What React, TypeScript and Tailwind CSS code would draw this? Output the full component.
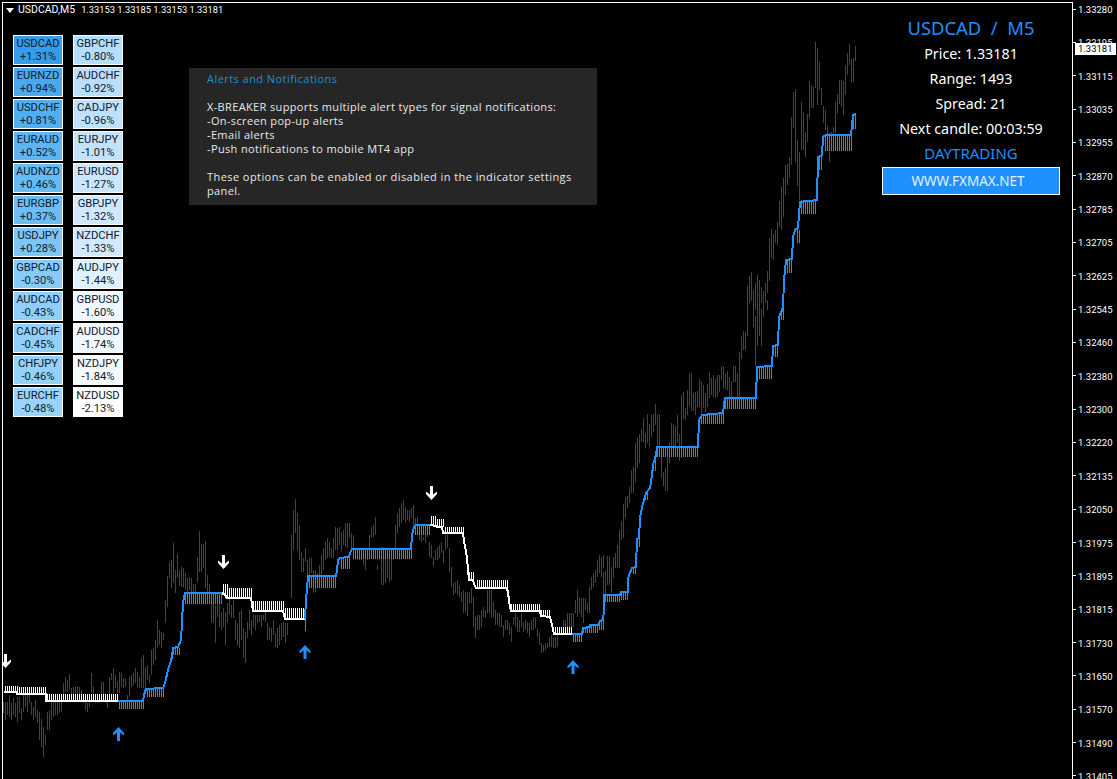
import React from 'react';

type Tick = [number, number, number, number];

const BLUE = '#1e90ff';

// price bars, read off the chart as [top, bottom] pairs in 3x crop units, every 2px
const barRuns: { ox: number; oy: number; start: number; pairs: number[] }[] = [
  {
    ox: 0, oy: 560, start: 10,
    pairs: [425,458,425,480,425,465,405,470,430,480,415,465,430,470,410,485,410,460,445,480,405,455,405,440,405,455,405,430,425,465,440,480,420,470,450,490,455,540,478,560,500,590,525,555,455,510,450,510,425,480,425,470,425,465,420,465,425,460,425,455,370,420,350,395,360,395,342,390,385,420,380,415,380,420,378,415,380,410,390,425,410,430,425,450,430,455,420,440,340,400,380,420,410,430,420,430,420,430,365,420,365,420,420,430,420,445,350,410,340,360,325,400,345,385,365,400,335,400,340,380,355,385,355,380,405,420,350,410,345,380,340,375,325,370,335,380,350,385,295,385,285,385,320,390,315,360,345,370,270,345,265,315,240,300,180,260,210,255,215,265,220,240,120,190],
  },
  {
    ox: 160, oy: 490, start: 22,
    pairs: [258,351,216,264,210,294,159,279,240,309,192,264,240,288,228,291,234,291,249,300,264,306,261,300,264,309,282,330,282,330,201,276,123,246,162,246,162,234,153,294,255,309,282,339],
  },
  {
    ox: 0, oy: 560, start: 634,
    pairs: [130,190,130,190,135,250,135,170,115,200,155,210,145,200,155,255,130,190,115,165,135,175,120,175,180,240,190,255,155,265,150,240,205,295,215,310,185,235,150,210,180,225,165,200,165,210,165,190,165,185,165,200,165,180,150,185,190,240,200,240,205,245,180,225,220,260,205,265,195,255,190,240,185,230,190,250,190,225],
  },
  {
    ox: 290, oy: 470, start: 4,
    pairs: [195,385,120,240,88,190,130,240,165,270,245,305,265,305,235,275,270,315,265,350,265,310,300,370,300,365,310,345,285,345,255,330,235,300,215,270,205,265,215,260,235,265,205,265,170,240,175,240,170,225,185,245,180,225,160,230,160,235,160,205,190,235,195,240,240,270,240,270,240,270,240,270,250,285,240,300,240,270,195,235,170,205,165,200,140,195,285,300,240,270,230,345,230,345,240,340,240,325,240,335,240,330,240,270,165,235,130,190,115,170,100,160,90,150,110,155,120,150,120,155,115,145,105,165,145,190,140,185,195,210,190,215,200,210,195,218,170,200,215,260,225,265,260,288,240,270,230,270,225,265,215,250,240,278,195,240,195,235,235,305,290,350,340,375,335,370,330,375,345,380,365,395,360,430,365,430,365,438,365,400,355,400,380,470,440,505,435,480,435,480,420,470,410,440,420,445,360,430,360,430,360,445,395,440,420,465,430,465,430,470,435,470,465,500,450,480,450,480,460,495,470,515,440,465,430,470,440,485,450,485,430,470,455,485,450,480,455,490,460,500,450,480,440,480,445,475,478,500,490,525,520,550,525,545,520,540,520,535,500,530,495,530,505,535,500,535,495,530,480,495,480,495,450,490,450,490,430,470,430,470,430,470,430,470,390,430,360,440,380,430,385,440,385,460,385,420,400,430,350,430,320,360,310,350,300,340,270,320,255,310,260,320,255,295,305,375,260,345,270,345],
  },
  {
    ox: 600, oy: 300, start: 10,
    pairs: [815,885,812,878,768,840,768,810,800,878,770,835,758,805,735,805,690,805,663,720,612,715,590,655,588,625,560,610,510,580,500,578,430,545,415,505,403,490,387,425,353,425,400,443,342,430,372,440,345,410,342,395,312,375,345,440,342,440,470,535,515,558,505,572,470,572,427,490,370,440,373,440,378,440,345,430,403,482,285,475,276,358,325,360,270,345,222,318,220,332,278,332,276,345,273,320,237,320,243,340,255,325,280,335,252,320,217,295,235,285,225,290,237,295,225,290,225,275,202,240,198,265,222,268,213,270,232,290,243,292,198,247,198,245,220,290,155,290,108,177,93,150,97,150],
  },
  {
    ox: 600, oy: 300, start: 442,
    pairs: [0,107,0,8,0,3,0,80,48,197,0,137,0,107,27,137,0,50,0,8,0,30],
  },
  {
    ox: 740, oy: 30, start: 22,
    pairs: [768,840,738,815,726,812,780,840,760,840,735,840,750,840,770,820,783,820,760,820,723,790,625,752,598,685,612,690,600,640,576,645,513,590,472,600,445,560,405,495,402,465,380,445,262,405,187,295,178,395,330,468,365,510,217,360,247,360,307,380,252,335,153,265,165,235,172,235,37,173,55,225,97,180,175,225,228,280,240,300,288,340,310,395,305,350,292,340,217,310,193,250,150,222,150,230,153,255,105,195,68,135,43,105,88,160,85,155,48,92],
  },
];

const bars = barRuns.flatMap((run) => {
  const out: [number, number, number][] = [];
  for (let i = 0; i < run.pairs.length; i += 2) {
    out.push([
      Math.round(run.ox + (run.start + 3 * i) / 3),
      Math.round(run.oy + run.pairs[i] / 3),
      Math.round(run.oy + run.pairs[i + 1] / 3),
    ]);
  }
  return out;
});

const whiteLines = [
  '4,692 17,692 17,694 46,694 46,701 118,701',
  '222,593 225,595 227,598 251,598 252,604 253,611 283,611 284,615 285,619 305,619',
  '430,525 436,526 437,527 442,527 443,533 463,533 464,541 466,552 467,558 468,570 469,580 473,580 474,584 476,588 507,588 508,593 509,600 510,607 511,611 540,611 541,616 550,617 552,625 554,634 572,634',
];

const blueLines = [
  '118,701 143,701 144,695 146,689 163,688 165,683 168,670 172,657 173,648 178,647 181,640 182,623 183,602 185,593 222,593',
  '305,619 306,600 307,588 308,576 336,576 337,570 338,560 340,558 349,557 350,553 352,549 411,549 412,535 414,527 416,525 430,525',
  '572,634 582,634 583,628 590,627 590,625 598,625 600,621 603,620 604,610 604,595 620,595 621,592 628,592 628,578 632,568 636,567 637,539 639,538 640,518 642,507 646,493 650,488 652,475 653,465 656,455 657,447 698,447 699,420 702,415 723,413 725,398 756,398 757,367 772,366 773,346 778,345 779,317 783,308 784,280 786,260 792,259 793,237 795,230 798,228 800,202 817,200 818,157 822,155 823,137 826,135 851,135 853,115 856,114',
];

// x from, x to, y from, y to
const blueTicks: Tick[] = [
  [119, 143, 701, 709], [147, 163, 689, 697], [173, 180, 648, 655], [185, 221, 594, 604],
  [305, 305, 619, 631], [309, 336, 576, 588], [341, 349, 558, 569], [353, 411, 549, 559],
  [415, 429, 525, 535], [573, 581, 634, 642], [583, 589, 628, 633], [591, 597, 625, 633],
  [599, 603, 621, 630], [605, 619, 595, 602], [621, 627, 592, 600], [633, 635, 568, 574],
  [637, 639, 538, 547], [645, 647, 493, 500], [653, 655, 460, 471], [657, 697, 447, 457],
  [701, 723, 414, 424], [725, 755, 398, 409], [759, 771, 366, 379], [775, 777, 345, 357],
  [781, 783, 308, 320], [787, 791, 259, 273], [797, 799, 230, 243], [801, 815, 200, 214],
  [819, 821, 155, 170], [825, 851, 135, 151], [853, 855, 114, 129],
];

const whiteTicks: Tick[] = [
  [5, 17, 686, 692], [17, 45, 687, 694], [47, 117, 694, 701], [223, 227, 584, 594],
  [227, 251, 588, 598], [253, 283, 601, 611], [285, 305, 608, 619], [431, 435, 516, 525],
  [437, 443, 519, 527], [445, 463, 527, 533], [469, 473, 572, 580], [477, 507, 580, 588],
  [511, 539, 604, 611], [541, 549, 610, 617], [555, 571, 627, 634],
];

const upArrow = '0,0 5.5,6 5.5,8.5 1.5,5.5 1.5,14 -1.5,14 -1.5,5.5 -5.5,8.5 -5.5,6';
const downArrow = '0,14 5.5,8 5.5,5.5 1.5,8.5 1.5,0 -1.5,0 -1.5,8.5 -5.5,5.5 -5.5,8';

const arrows = [
  { x: 118.5, y: 727, up: true },
  { x: 305, y: 645, up: true },
  { x: 573, y: 660, up: true },
  { x: 5.5, y: 654, up: false },
  { x: 223.5, y: 555, up: false },
  { x: 431.5, y: 486, up: false },
];

const priceLabels = [
  '1.33280', '1.33195', '1.33115', '1.33035', '1.32955', '1.32870', '1.32785', '1.32705',
  '1.32625', '1.32545', '1.32460', '1.32380', '1.32300', '1.32220', '1.32135', '1.32050',
  '1.31975', '1.31895', '1.31815', '1.31730', '1.31650', '1.31570', '1.31490', '1.31405',
];

const pairs = [
  { name: 'USDCAD', pct: '+1.31%', bg: 'bg-[#359cea]' },
  { name: 'GBPCHF', pct: '-0.80%', bg: 'bg-[#b5ddfe]' },
  { name: 'EURNZD', pct: '+0.94%', bg: 'bg-[#4aa8f0]' },
  { name: 'AUDCHF', pct: '-0.92%', bg: 'bg-[#badffe]' },
  { name: 'USDCHF', pct: '+0.81%', bg: 'bg-[#52aef2]' },
  { name: 'CADJPY', pct: '-0.96%', bg: 'bg-[#bde1fe]' },
  { name: 'EURAUD', pct: '+0.52%', bg: 'bg-[#5eb5f4]' },
  { name: 'EURJPY', pct: '-1.01%', bg: 'bg-[#c2e3fe]' },
  { name: 'AUDNZD', pct: '+0.46%', bg: 'bg-[#66baf6]' },
  { name: 'EURUSD', pct: '-1.27%', bg: 'bg-[#cbe7ff]' },
  { name: 'EURGBP', pct: '+0.37%', bg: 'bg-[#6cbdf7]' },
  { name: 'GBPJPY', pct: '-1.32%', bg: 'bg-[#d0e9ff]' },
  { name: 'USDJPY', pct: '+0.28%', bg: 'bg-[#7cc4f9]' },
  { name: 'NZDCHF', pct: '-1.33%', bg: 'bg-[#d2eaff]' },
  { name: 'GBPCAD', pct: '-0.30%', bg: 'bg-[#86cbfa]' },
  { name: 'AUDJPY', pct: '-1.44%', bg: 'bg-[#dff0ff]' },
  { name: 'AUDCAD', pct: '-0.43%', bg: 'bg-[#90cffb]' },
  { name: 'GBPUSD', pct: '-1.60%', bg: 'bg-[#eef7ff]' },
  { name: 'CADCHF', pct: '-0.45%', bg: 'bg-[#92d0fb]' },
  { name: 'AUDUSD', pct: '-1.74%', bg: 'bg-[#f0f8ff]' },
  { name: 'CHFJPY', pct: '-0.46%', bg: 'bg-[#94d2fb]' },
  { name: 'NZDJPY', pct: '-1.84%', bg: 'bg-[#f5faff]' },
  { name: 'EURCHF', pct: '-0.48%', bg: 'bg-[#98d4fc]' },
  { name: 'NZDUSD', pct: '-2.13%', bg: 'bg-white' },
];

function tickPath(ticks: Tick[]) {
  let d = '';
  for (const [x0, x1, y0, y1] of ticks) {
    for (let x = x0 % 2 === 1 ? x0 : x0 + 1; x <= x1; x += 2) {
      d += `M${x + 0.5} ${y0}V${y1}`;
    }
  }
  return d;
}

function Chart() {
  return (
    <svg width="1069" height="776" viewBox="3 3 1069 776" className="block">
      <g fill="#444444" shapeRendering="crispEdges">
        {bars.map(([x, top, bottom], i) => (
          <rect key={i} x={x} y={top} width="1" height={bottom - top} />
        ))}
      </g>
      <path d={tickPath(whiteTicks)} stroke="#ffffff" strokeWidth="1" shapeRendering="crispEdges" />
      <path d={tickPath(blueTicks)} stroke={BLUE} strokeWidth="1" shapeRendering="crispEdges" />
      {whiteLines.map((points) => (
        <polyline key={points} points={points} fill="none" stroke="#ffffff" strokeWidth="2" shapeRendering="crispEdges" />
      ))}
      {blueLines.map((points) => (
        <polyline key={points} points={points} fill="none" stroke={BLUE} strokeWidth="2" shapeRendering="crispEdges" />
      ))}
      {arrows.map((a) => (
        <polygon
          key={a.x}
          points={a.up ? upArrow : downArrow}
          transform={`translate(${a.x} ${a.y})`}
          fill={a.up ? BLUE : '#ffffff'}
        />
      ))}
    </svg>
  );
}

function PriceAxis() {
  return (
    <div className="relative h-[779px] w-[44px] pt-[3px] font-['Roboto',sans-serif] text-[9.5px] text-white">
      <div className="flex h-[779px] flex-col justify-between">
        {priceLabels.map((label) => (
          <div key={label} className="flex h-[12px] items-center">
            <span className="h-px w-[3px] bg-white" />
            <span className="ml-[2px] translate-y-[1px] leading-[12px]">{label}</span>
          </div>
        ))}
      </div>
      <div className="absolute left-[2px] top-[43px] flex h-[12px] w-[41px] items-center bg-white pl-[3px] leading-[12px] text-black">
        1.33181
      </div>
    </div>
  );
}

function PairTable() {
  return (
    <div className="absolute left-[13px] top-[35px] grid grid-cols-[50px_50px] gap-x-[10px] gap-y-[2px] font-['Roboto',sans-serif] text-[11.2px] leading-[13px] text-[#10202c]">
      {pairs.map((p) => (
        <div key={p.name} className={`flex h-[30px] flex-col items-center justify-center border border-white ${p.bg}`}>
          <span>{p.name}</span>
          <span>{p.pct}</span>
        </div>
      ))}
    </div>
  );
}

function NoticePanel() {
  return (
    <div className="absolute left-[189px] top-[68px] h-[137px] w-[408px] bg-[#262626] pl-[18px] pt-[4px] font-['Open_Sans',sans-serif] text-[11px] leading-[14px] tracking-[0.36px] text-[#e8e8e8]">
      <p className="tracking-[0.45px] text-[#1a8fd8]">Alerts and Notifications</p>
      <p className="mt-[14px]">X-BREAKER supports multiple alert types for signal notifications:</p>
      <p>-On-screen pop-up alerts</p>
      <p>-Email alerts</p>
      <p>-Push notifications to mobile MT4 app</p>
      <p className="mt-[14px] tracking-[0.43px]">These options can be enabled or disabled in the indicator settings</p>
      <p>panel.</p>
    </div>
  );
}

function InfoPanel() {
  return (
    <div className="absolute left-[882px] top-[16px] flex w-[178px] flex-col items-center font-['Noto_Sans',sans-serif] text-[14.3px] text-white">
      <div className="h-[24px] whitespace-pre text-[18.4px] leading-[24px] text-[#1e90ff]">USDCAD  /  M5</div>
      <div className="mt-[1px] h-[25px] leading-[25px]">Price: 1.33181</div>
      <div className="h-[25px] leading-[25px]">Range: 1493</div>
      <div className="h-[25px] leading-[25px]">Spread: 21</div>
      <div className="h-[25px] leading-[25px]">Next candle: 00:03:59</div>
      <div className="h-[24px] text-[15px] leading-[24px] text-[#1e90ff]">DAYTRADING</div>
      <div className="mt-[2px] flex h-[28px] w-full items-center justify-center border border-white bg-[#1e90ff] pr-[6px] text-[13.5px] text-[#e3efff]">
        WWW.FXMAX.NET
      </div>
    </div>
  );
}

export default function App() {
  return (
    <div className="relative flex h-[779px] w-[1117px] overflow-hidden bg-black">
      <div className="ml-[2px] mt-[2px] h-[777px] w-[1071px] border-x border-t border-white">
        <Chart />
      </div>
      <PriceAxis />

      <div className="absolute left-[6px] top-[4px] flex h-[12px] items-center font-['Roboto',sans-serif] text-white">
        <svg width="8" height="5" viewBox="0 0 8 5" className="mr-[4px]">
          <polygon points="0,0 8,0 4,5" fill="#ffffff" />
        </svg>
        <span className="text-[10.5px]">USDCAD,M5</span>
        <span className="ml-[6px] text-[9.3px]">1.33153 1.33185 1.33153 1.33181</span>
      </div>

      <PairTable />
      <NoticePanel />
      <InfoPanel />
    </div>
  );
}
